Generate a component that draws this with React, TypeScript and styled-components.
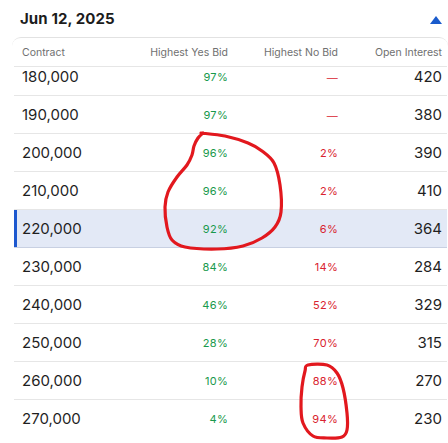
import React, { useLayoutEffect, useRef } from 'react';
import styled, { createGlobalStyle, css } from 'styled-components';

const GlobalStyle = createGlobalStyle`
  html, body { margin: 0; padding: 0; background: #fff; }
  body { font-family: Inter, "Liberation Sans", sans-serif; color: #1f1f1f; }
  * { box-sizing: border-box; }
`;

const Page = styled.div`
  position: relative;
  width: 448px;
  height: 443px;
  overflow: hidden;
  display: flex;
  flex-direction: column;
`;

const TitleBar = styled.div`
  flex: none;
  height: 37px;
  display: flex;
  align-items: center;
  justify-content: space-between;
  padding: 0 6px 0 20px;
`;

const Title = styled.h1`
  margin: 0;
  font-size: 15px;
  font-weight: 700;
  color: #1c1c1c;
  letter-spacing: 0.1px;
`;

const SortArrow = styled.span`
  width: 0;
  height: 0;
  margin-top: 3px;
  border-left: 6.5px solid transparent;
  border-right: 6.5px solid transparent;
  border-bottom: 8px solid #1a5bcc;
`;

const Card = styled.div`
  flex: 1;
  min-height: 0;
  margin-left: 12px;
  padding: 0 1px 0 2px;
  border-top: 1px solid #e2e2e2;
  border-radius: 9px 9px 0 0;
  display: flex;
  flex-direction: column;
`;

const gridCols = css`
  display: grid;
  grid-template-columns: 106px 113px 110px 104px;
  align-items: center;
`;

const HeaderRow = styled.div`
  ${gridCols};
  flex: none;
  height: 29px;
  border-bottom: 1px solid #e6e6e6;
`;

const HeadCell = styled.div<{ $left?: boolean }>`
  font-size: 10.5px;
  color: #707070;
  text-align: ${(p) => (p.$left ? 'left' : 'right')};
  padding: ${(p) => (p.$left ? '0 0 0 8px' : '0 5px 0 0')};
  white-space: nowrap;
`;

const Body = styled.div`
  flex: 1;
  min-height: 0;
  overflow-y: auto;
  scrollbar-width: none;
  padding-bottom: 20px;
  &::-webkit-scrollbar { display: none; }
`;

const Row = styled.div<{ $selected?: boolean }>`
  ${gridCols};
  height: 38px;
  border-bottom: 1px solid #e6e6e6;
  &:last-child { border-bottom-color: transparent; }
  ${(p) =>
    p.$selected &&
    css`
      background: #e3e9f6;
      box-shadow: inset 3px 0 0 #1d58cf;
      border-bottom-color: #c8d0e2;
    `}
`;

const Strike = styled.div`
  padding-left: 8px;
  font-size: 15px;
  color: #1f1f1f;
`;

const Pct = styled.div<{ $tone: 'yes' | 'no' }>`
  text-align: right;
  padding-right: 5px;
  font-size: 11px;
  letter-spacing: 0.3px;
  color: ${(p) => (p.$tone === 'yes' ? '#18994c' : '#d92330')};
`;

const Dash = styled.span`
  font-family: "Liberation Sans", sans-serif;
  font-size: 11px;
  color: #d92330;
`;

const Interest = styled.div`
  text-align: right;
  padding-right: 5px;
  font-size: 15px;
  color: #1f1f1f;
`;

const Annotation = styled.svg`
  position: absolute;
  left: 0;
  top: 0;
  pointer-events: none;
`;

type Pt = [number, number];

function smoothPath(pts: Pt[], closed: boolean): string {
  const n = pts.length;
  let d = `M ${pts[0][0]} ${pts[0][1]}`;
  const segs = closed ? n : n - 1;
  for (let i = 0; i < segs; i++) {
    const p0 = pts[closed ? (i - 1 + n) % n : Math.max(i - 1, 0)];
    const p1 = pts[i];
    const p2 = pts[(i + 1) % n];
    const p3 = pts[closed ? (i + 2) % n : Math.min(i + 2, n - 1)];
    const c1x = p1[0] + (p2[0] - p0[0]) / 6;
    const c1y = p1[1] + (p2[1] - p0[1]) / 6;
    const c2x = p2[0] - (p3[0] - p1[0]) / 6;
    const c2y = p2[1] - (p3[1] - p1[1]) / 6;
    d += ` C ${c1x.toFixed(1)} ${c1y.toFixed(1)} ${c2x.toFixed(1)} ${c2y.toFixed(1)} ${p2[0]} ${p2[1]}`;
  }
  return closed ? d + ' Z' : d;
}

const loopYes: Pt[] = [
  [201, 133], [225, 136], [248, 143], [262, 151], [274, 163], [280, 185], [281, 212],
  [275, 227], [262, 238], [243, 246], [217, 249], [185, 247], [172, 240], [167, 227],
  [165, 207], [168, 192], [177, 177], [187, 165], [192, 155], [194, 146], [198, 138], [203, 133],
];

const loopNo: Pt[] = [
  [308, 365], [327, 365], [337, 373], [343, 388], [347, 413], [347, 430], [342, 437],
  [327, 438], [313, 436], [303, 423], [301, 407], [302, 387], [305, 371],
];

type Market = { strike: string; yes: string; no: string | null; oi: number; selected?: boolean };

const markets: Market[] = [
  { strike: '180,000', yes: '97%', no: null, oi: 420 },
  { strike: '190,000', yes: '97%', no: null, oi: 380 },
  { strike: '200,000', yes: '96%', no: '2%', oi: 390 },
  { strike: '210,000', yes: '96%', no: '2%', oi: 410 },
  { strike: '220,000', yes: '92%', no: '6%', oi: 364, selected: true },
  { strike: '230,000', yes: '84%', no: '14%', oi: 284 },
  { strike: '240,000', yes: '46%', no: '52%', oi: 329 },
  { strike: '250,000', yes: '28%', no: '70%', oi: 315 },
  { strike: '260,000', yes: '10%', no: '88%', oi: 270 },
  { strike: '270,000', yes: '4%', no: '94%', oi: 230 },
];

export default function App() {
  const bodyRef = useRef<HTMLDivElement>(null);
  useLayoutEffect(() => {
    if (bodyRef.current) bodyRef.current.scrollTop = 9;
  }, []);

  return (
    <>
      <GlobalStyle />
      <Page>
        <TitleBar>
          <Title>Jun 12, 2025</Title>
          <SortArrow />
        </TitleBar>
        <Card>
          <HeaderRow>
            <HeadCell $left>Contract</HeadCell>
            <HeadCell>Highest Yes Bid</HeadCell>
            <HeadCell>Highest No Bid</HeadCell>
            <HeadCell>Open Interest</HeadCell>
          </HeaderRow>
          <Body ref={bodyRef}>
            {markets.map((m) => (
              <Row key={m.strike} $selected={m.selected}>
                <Strike>{m.strike}</Strike>
                <Pct $tone="yes">{m.yes}</Pct>
                <Pct $tone="no">{m.no ?? <Dash>—</Dash>}</Pct>
                <Interest>{m.oi}</Interest>
              </Row>
            ))}
          </Body>
        </Card>
        <Annotation width={448} height={443} viewBox="0 0 448 443">
          <g fill="none" stroke="#e2181e" strokeWidth={3.2} strokeLinecap="round" strokeLinejoin="round">
            <path d={smoothPath(loopYes, false)} />
            <path d={smoothPath(loopNo, true)} />
          </g>
        </Annotation>
      </Page>
    </>
  );
}
